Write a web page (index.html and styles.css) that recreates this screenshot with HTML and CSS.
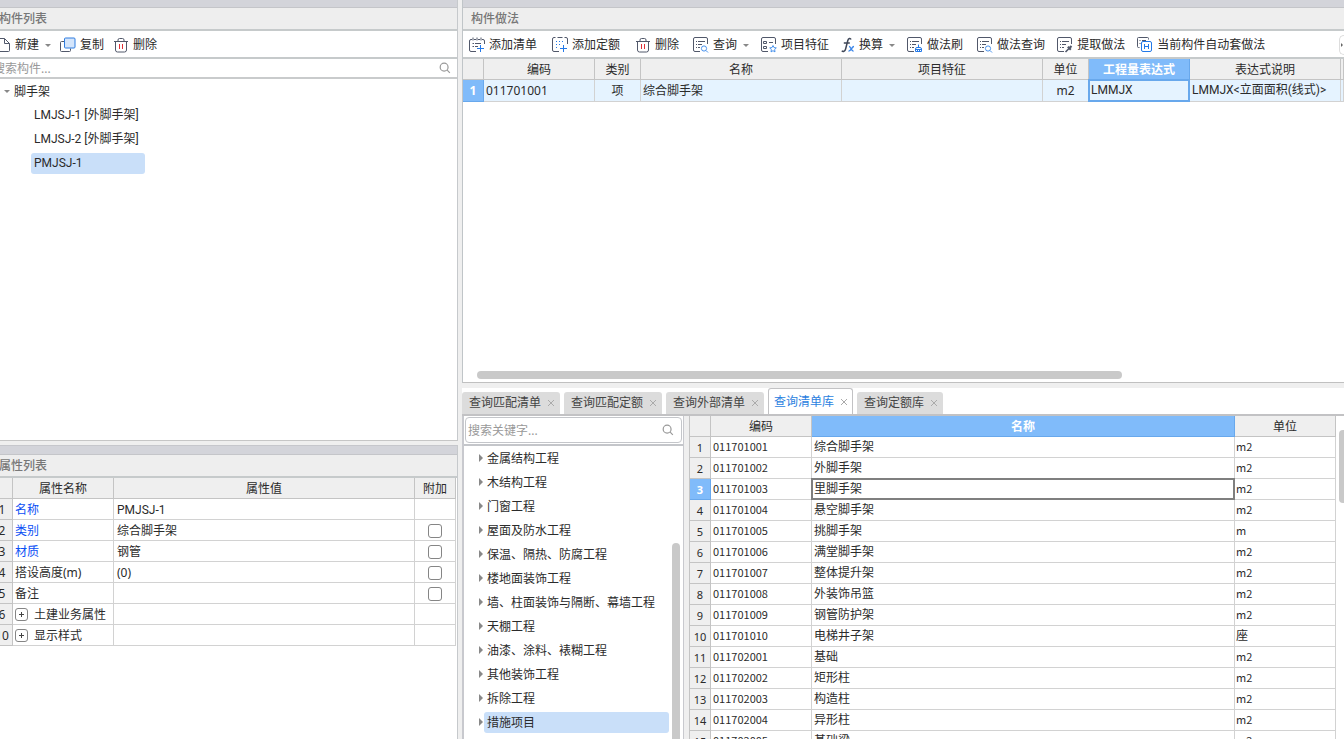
FILE: index.html
```
<!DOCTYPE html>
<html lang="zh-CN">
<head>
<meta charset="utf-8">
<title>构件做法</title>
<link rel="stylesheet" href="styles.css">
</head>
<body>
<svg class="defs" aria-hidden="true">
  <symbol id="i-trash" viewBox="0 0 16 16"><path d="M1 4.500h14M5 4.500V3a1.500 1.500 0 0 1 1.500-1.500h3A1.500 1.500 0 0 1 11 3v1.500M2.500 4.500V13a2 2 0 0 0 2 2h7a2 2 0 0 0 2-2V4.500" class="ink"/><path d="M6.500 7v5M9.500 7v5" class="red"/></symbol>
  <symbol id="i-doc" viewBox="0 0 16 16"><path d="M2.500 1.500h7l5 5v7a1 1 0 0 1-1 1h-11a1 1 0 0 1-1-1v-11a1 1 0 0 1 1-1zM9.500 1.500v5h5" class="ink"/></symbol>
  <symbol id="i-copy" viewBox="0 0 16 16"><path d="M4.500 4.500h-3a1 1 0 0 0-1 1v8a1 1 0 0 0 1 1h8a1 1 0 0 0 1-1v-2" class="ink"/><rect x="4.500" y="1" width="10.500" height="10" rx="1" fill="#d4e5fb" stroke="#2f7de0"/></symbol>
  <symbol id="i-find" viewBox="0 0 16 16"><circle cx="7" cy="7" r="4.500" fill="none" stroke="#999" stroke-width="1.400"/><path d="M10.500 10.500l3 3" stroke="#999" stroke-width="1.400"/></symbol>
  <symbol id="i-addlist" viewBox="0 0 16 16"><path d="M3 2.500H2A1.500 1.500 0 0 0 .5 4v9A1.500 1.500 0 0 0 2 14.500h5M13 2.500h1A1.500 1.500 0 0 1 15.500 4v3M5 2.500h2M9 2.500h2M4 .5v3M8 .5v3M12 .5v3" class="ink"/><path d="M3.500 6.500H5M6 6.500h6M3.500 9.500H5M6 9.500h3" class="ink"/><path d="M11.500 8v7M8 11.500h7" class="blue"/></symbol>
  <symbol id="i-addquota" viewBox="0 0 16 16"><path d="M3.500.5H2A1.500 1.500 0 0 0 .5 2v11A1.500 1.500 0 0 0 2 14.500h5M5.500.5h5M12.500.5H14A1.500 1.500 0 0 1 15.500 2v5" class="ink"/><path d="M4 4.500h1M7 4.500h1M10 4.500h1M4 7.500h1M7 7.500h1M4 10.500h1" class="blue"/><path d="M11.500 8v7M8 11.500h7" class="blue"/></symbol>
  <symbol id="i-sheet" viewBox="0 0 16 16"><path d="M7 14.500H2A1.500 1.500 0 0 1 .5 13V2A1.500 1.500 0 0 1 2 .5h11A1.500 1.500 0 0 1 14.500 2v5M3 4.500h1M5 4.500h7M3 7.500h1M5 7.500h4M3 10.500h1M5 10.500h2" class="ink"/></symbol>
  <symbol id="i-query" viewBox="0 0 16 16"><use href="#i-sheet"/><circle cx="11" cy="11.500" r="2.600" class="sky"/><path d="M13 13.500l2 2" class="sky"/></symbol>
  <symbol id="i-feature" viewBox="0 0 16 16"><path d="M7 14.500H2A1.500 1.500 0 0 1 .5 13V2A1.500 1.500 0 0 1 2 .5h11A1.500 1.500 0 0 1 14.500 2v5M2.500 4.500h3v2h-3zM2.500 9.500h3v2h-3zM8 5.500h4" class="ink"/><path d="M12 8.500l1 2.100 2.300.3-1.700 1.600.4 2.400-2-1.200-2 1.200.4-2.400-1.700-1.600 2.300-.3z" class="sky"/></symbol>
  <symbol id="i-fx" viewBox="0 0 14 16"><path d="M10 2.500C9.500 1 7.500 1 6.800 3.500L4.600 12C4 14.500 2 15 .8 13.800M2.800 6h6" fill="none" stroke="#3f4758" stroke-width="1.500"/><path d="M8 9.500c2-.5 2 5 4.500 4.500M13 9.500c-2-.3-3 5-5.500 4.500" fill="none" stroke="#3d87e8" stroke-width="1.400"/></symbol>
  <symbol id="i-brush" viewBox="0 0 16 16"><use href="#i-sheet"/><path d="M11.500 7.500v3M8.500 14.500V12A1.500 1.500 0 0 1 10 10.500h3a1.500 1.500 0 0 1 1.500 1.500v2.500zM8.500 12.500h6M10.500 12.500v2M12.500 12.500v2" class="blue"/></symbol>
  <symbol id="i-pick" viewBox="0 0 16 16"><use href="#i-sheet"/><path d="M8.500 15l3.500-3.500" stroke="#51586a" stroke-width="1.600"/><path d="M10.800 9.700l3 3M12.300 11.300l2.200-2.300" stroke="#51586a" stroke-width="2"/></symbol>
  <symbol id="i-auto" viewBox="0 0 16 16"><path d="M2.500 10.500h-1a1 1 0 0 1-1-1v-8a1 1 0 0 1 1-1h9a1 1 0 0 1 1 1v1M2.500 3.500h1M5 3.500h4M2.500 6.500h1" class="ink"/><rect x="4.500" y="4.500" width="10" height="10" rx="1.500" fill="#fff" stroke="#2379e8"/><path d="M7.500 7v5M11.500 7v5M7.500 9.500h4" class="blue"/></symbol>
</svg>

<div class="app">
  <aside class="side">
    <section class="panel side-top">
      <div class="strip"></div>
      <h2 class="title">构件列表</h2>
      <div class="toolbar">
        <button class="tool"><svg class="icon"><use href="#i-doc"/></svg>新建<i class="drop"></i></button>
        <button class="tool"><svg class="icon"><use href="#i-copy"/></svg>复制</button>
        <button class="tool"><svg class="icon"><use href="#i-trash"/></svg>删除</button>
      </div>
      <label class="search"><input type="text" placeholder="搜索构件..." aria-label="搜索构件"><svg class="icon small"><use href="#i-find"/></svg></label>
      <ul class="tree parts">
        <li><button class="node root"><i class="drop"></i>脚手架</button>
          <ul>
            <li><button class="node ident">LMJSJ-1 [外脚手架]</button></li>
            <li><button class="node ident">LMJSJ-2 [外脚手架]</button></li>
            <li><button class="node ident selected">PMJSJ-1</button></li>
          </ul>
        </li>
      </ul>
    </section>
    <section class="panel side-bottom">
      <div class="strip"></div>
      <h2 class="title">属性列表</h2>
      <table class="grid props">
        <colgroup><col class="w-no"><col class="w-name"><col><col class="w-check"></colgroup>
        <thead><tr><th></th><th>属性名称</th><th>属性值</th><th>附加</th></tr></thead>
        <tbody>
          <tr><th>1</th><td class="key">名称</td><td class="ident">PMJSJ-1</td><td></td></tr>
          <tr><th>2</th><td class="key">类别</td><td>综合脚手架</td><td class="mid"><input type="checkbox" aria-label="类别附加"></td></tr>
          <tr><th>3</th><td class="key">材质</td><td>钢管</td><td class="mid"><input type="checkbox" aria-label="材质附加"></td></tr>
          <tr><th>4</th><td>搭设高度(m)</td><td>(0)</td><td class="mid"><input type="checkbox" aria-label="搭设高度附加"></td></tr>
          <tr><th>5</th><td>备注</td><td></td><td class="mid"><input type="checkbox" aria-label="备注附加"></td></tr>
          <tr><th>6</th><td><span class="group"><button class="plus" aria-label="展开"></button>土建业务属性</span></td><td></td><td></td></tr>
          <tr><th>10</th><td><span class="group"><button class="plus" aria-label="展开"></button>显示样式</span></td><td></td><td></td></tr>
        </tbody>
      </table>
    </section>
  </aside>

  <main class="main">
    <section class="panel main-top">
      <div class="strip"></div>
      <h2 class="title">构件做法</h2>
      <div class="toolbar">
        <div class="tools wide">
          <button class="tool"><svg class="icon"><use href="#i-addlist"/></svg>添加清单</button>
          <button class="tool"><svg class="icon"><use href="#i-addquota"/></svg>添加定额</button>
          <button class="tool"><svg class="icon"><use href="#i-trash"/></svg>删除</button>
        </div>
        <div class="tools">
          <button class="tool"><svg class="icon"><use href="#i-query"/></svg>查询<i class="drop"></i></button>
          <button class="tool"><svg class="icon"><use href="#i-feature"/></svg>项目特征</button>
          <button class="tool"><svg class="icon narrow"><use href="#i-fx"/></svg>换算<i class="drop"></i></button>
          <button class="tool"><svg class="icon"><use href="#i-brush"/></svg>做法刷</button>
        </div>
        <div class="tools">
          <button class="tool"><svg class="icon"><use href="#i-query"/></svg>做法查询</button>
          <button class="tool"><svg class="icon"><use href="#i-pick"/></svg>提取做法</button>
          <button class="tool"><svg class="icon"><use href="#i-auto"/></svg>当前构件自动套做法</button>
        </div>
        <button class="more" aria-label="更多"></button>
      </div>
      <div class="sheet">
        <table class="grid method">
          <colgroup><col class="m-no"><col class="m-code"><col class="m-short"><col class="m-long"><col class="m-long"><col class="m-short"><col class="m-expr"><col class="m-desc"><col></colgroup>
          <thead><tr><th></th><th>编码</th><th>类别</th><th>名称</th><th>项目特征</th><th>单位</th><th class="on">工程量表达式</th><th>表达式说明</th><th></th></tr></thead>
          <tbody><tr><th class="on">1</th><td>011701001</td><td class="mid">项</td><td>综合脚手架</td><td></td><td class="mid">m2</td><td class="focus ident">LMMJX</td><td class="ident">LMMJX&lt;立面面积(线式)&gt;</td><td></td></tr></tbody>
        </table>
      </div>
      <div class="hscroll"><div class="thumb"></div></div>
    </section>

    <section class="main-bottom">
      <div class="tabs">
        <div class="tab"><button>查询匹配清单</button><button class="close" aria-label="关闭"></button></div>
        <div class="tab"><button>查询匹配定额</button><button class="close" aria-label="关闭"></button></div>
        <div class="tab"><button>查询外部清单</button><button class="close" aria-label="关闭"></button></div>
        <div class="tab active"><button>查询清单库</button><button class="close" aria-label="关闭"></button></div>
        <div class="tab"><button>查询定额库</button><button class="close" aria-label="关闭"></button></div>
      </div>
      <div class="library">
        <div class="chapters">
          <div class="searchbar"><label class="search boxed"><input type="text" placeholder="搜索关键字..." aria-label="搜索关键字"><svg class="icon small"><use href="#i-find"/></svg></label></div>
          <div class="chapter-body">
            <ul class="tree">
              <li><button class="node"><i class="fold"></i><span>金属结构工程</span></button></li>
              <li><button class="node"><i class="fold"></i><span>木结构工程</span></button></li>
              <li><button class="node"><i class="fold"></i><span>门窗工程</span></button></li>
              <li><button class="node"><i class="fold"></i><span>屋面及防水工程</span></button></li>
              <li><button class="node"><i class="fold"></i><span>保温、隔热、防腐工程</span></button></li>
              <li><button class="node"><i class="fold"></i><span>楼地面装饰工程</span></button></li>
              <li><button class="node"><i class="fold"></i><span>墙、柱面装饰与隔断、幕墙工程</span></button></li>
              <li><button class="node"><i class="fold"></i><span>天棚工程</span></button></li>
              <li><button class="node"><i class="fold"></i><span>油漆、涂料、裱糊工程</span></button></li>
              <li><button class="node"><i class="fold"></i><span>其他装饰工程</span></button></li>
              <li><button class="node"><i class="fold"></i><span>拆除工程</span></button></li>
              <li><button class="node"><i class="fold"></i><span class="selected">措施项目</span></button></li>
            </ul>
            <div class="vscroll"><div class="thumb"></div></div>
          </div>
        </div>
        <div class="items">
          <table class="grid list">
            <colgroup><col class="m-no"><col class="l-side"><col><col class="l-side"></colgroup>
            <thead><tr><th></th><th>编码</th><th class="on">名称</th><th>单位</th></tr></thead>
            <tbody>
              <tr><th>1</th><td>011701001</td><td>综合脚手架</td><td>m2</td></tr>
              <tr><th>2</th><td>011701002</td><td>外脚手架</td><td>m2</td></tr>
              <tr><th class="on">3</th><td>011701003</td><td class="focus">里脚手架</td><td>m2</td></tr>
              <tr><th>4</th><td>011701004</td><td>悬空脚手架</td><td>m2</td></tr>
              <tr><th>5</th><td>011701005</td><td>挑脚手架</td><td>m</td></tr>
              <tr><th>6</th><td>011701006</td><td>满堂脚手架</td><td>m2</td></tr>
              <tr><th>7</th><td>011701007</td><td>整体提升架</td><td>m2</td></tr>
              <tr><th>8</th><td>011701008</td><td>外装饰吊篮</td><td>m2</td></tr>
              <tr><th>9</th><td>011701009</td><td>钢管防护架</td><td>m2</td></tr>
              <tr><th>10</th><td>011701010</td><td>电梯井子架</td><td class="cjk">座</td></tr>
              <tr><th>11</th><td>011702001</td><td>基础</td><td>m2</td></tr>
              <tr><th>12</th><td>011702002</td><td>矩形柱</td><td>m2</td></tr>
              <tr><th>13</th><td>011702003</td><td>构造柱</td><td>m2</td></tr>
              <tr><th>14</th><td>011702004</td><td>异形柱</td><td>m2</td></tr>
              <tr><th>15</th><td>011702005</td><td>基础梁</td><td>m2</td></tr>
            </tbody>
          </table>
          <div class="vscroll"><div class="thumb"></div></div>
        </div>
      </div>
    </section>
  </main>
</div>
</body>
</html>
```
FILE: styles.css
```
* { box-sizing: border-box; }
body {
  margin: 0;
  height: 100vh;
  overflow: hidden;
  background: #efefef;
  color: #2b2b2b;
  font: 12px/20px "Noto Sans", "Noto Sans CJK SC", sans-serif;
}
button, input { font: inherit; color: inherit; }
button { border: 0; padding: 0; background: none; white-space: nowrap; }
ul { list-style: none; margin: 0; padding: 0; }
.defs { position: absolute; width: 0; height: 0; }
.ink { fill: none; stroke: #51586a; }
.blue { fill: none; stroke: #2379e8; }
.sky { fill: none; stroke: #4a93ec; }
.red { fill: none; stroke: #e03038; }
.ident { font-family: Roboto, "Noto Sans CJK SC", sans-serif; }

.app { display: grid; grid-template-columns: 458px minmax(0, 1fr); gap: 4px; height: 100%; overflow: hidden; }
.side, .main { display: flex; flex-direction: column; min-width: 0; min-height: 0; }
.side { gap: 4px; margin-left: -8px; }
.main { gap: 5px; }
.panel { display: flex; flex-direction: column; min-height: 0; background: #fff; overflow: hidden; }
.side-top { flex: 441 1 0; border-right: 1px solid #c6c9cc; border-bottom: 1px solid #c6c6c6; }
.side-bottom { flex: 294 1 0; border-top: 1px solid #c6c7cc; border-right: 1px solid #c6c9cc; }
.main-top { flex: 383 1 0; border-left: 1px solid #c0c5c8; border-bottom: 1px solid #c0c0c0; }

.strip { flex: none; height: 8px; background: #d3d4da; border-bottom: 1px solid #c4c5c9; }
.side-bottom .strip { height: 9px; }
.title {
  flex: none; margin: 0; height: 23px; padding: 0 8px; line-height: 21px;
  background: #eee; border-bottom: 2px solid #c6cacb;
  color: #777; font-size: 12px; font-weight: 500;
}
.side .title { padding: 0 7px; }
.toolbar { flex: none; display: flex; align-items: center; gap: 14px; height: 28px; padding: 2px 0 0 6px; border-bottom: 2px solid #c6cacb; }
.side .toolbar { gap: 9px; padding-left: 3px; }
.tools { display: flex; gap: 12px; }
.tools.wide { gap: 15px; }
.tool { display: flex; align-items: center; gap: 4px; }
.icon { flex: none; width: 16px; height: 16px; }
.icon.narrow { width: 14px; }
.icon.small { width: 14px; height: 14px; }
.drop { border: 3px solid transparent; border-top-color: #888; border-bottom: 0; }
.tool .drop { margin-left: 2px; }
.more { width: 5px; height: 20px; margin-left: auto; border: 1px solid #ddd; border-right: 0; border-radius: 5px 0 0 5px; display: grid; place-items: center; }
.more::before { content: ""; border: 2px solid transparent; border-left-color: #666; border-right: 0; }

.search { flex: none; display: flex; align-items: center; height: 20px; padding-right: 5px; border-bottom: 2px solid #c9cbcc; }
.search input { flex: 1; min-width: 0; height: 18px; border: 0; padding: 2px 1px 0; background: none; outline: 0; }
.search input::placeholder { color: #999; opacity: 1; }
.search.boxed { height: 26px; padding: 0 6px 0 0; border: 1px solid #c4c6ca; border-radius: 4px; background: #fff; }
.search.boxed input { padding-left: 2px; }

.node { display: flex; align-items: center; height: 24px; line-height: 21px; }
.root { gap: 4px; padding-left: 12px; }
.parts ul { padding-left: 39px; }
.parts ul li { height: 24px; display: flex; align-items: center; }
.parts ul .node { height: 21px; width: 114px; padding-left: 3px; border-radius: 3px; }
.selected { background: #c9dff9; border-radius: 3px; }

.grid { width: 100%; table-layout: fixed; border-collapse: separate; border-spacing: 0; }
.grid th, .grid td {
  height: 21px; padding: 2px 2px 0; line-height: 18px; overflow: hidden; white-space: nowrap;
  border-right: 1px solid #d2d2d2; border-bottom: 1px solid #d2d2d2;
  font-weight: 400; text-align: left;
}
.grid th { padding: 2px 0 0; background: #efefef; border-color: #c4c4c4; text-align: center; }
.grid .mid { text-align: center; }
.grid th.on { background: #80bbfa; border-color: #68a8ec; color: #fff; font-weight: 700; }

.props { width: auto; margin-right: 1px; }
.w-no { width: 21px; }
.w-name { width: 101px; }
.w-check { width: 41px; }
.props td:nth-child(3) { padding-left: 3px; }
.props .key { color: #0b50f5; }
.props input {
  appearance: none; display: block; width: 14px; height: 14px; margin: 0 auto;
  border: 1px solid #858585; border-radius: 3px; background: #fff;
}
.group { display: flex; align-items: center; gap: 6px; }
.plus { width: 13px; height: 13px; border: 1px solid #858585; border-radius: 3px; display: grid; place-items: center; }
.plus::before { content: ""; width: 5px; height: 5px; background: linear-gradient(#444, #444) center / 5px 1px no-repeat, linear-gradient(#444, #444) center / 1px 5px no-repeat; }

.sheet { flex: 1; min-height: 0; overflow: hidden; }
.m-no { width: 21px; }
.m-code { width: 111px; }
.m-short { width: 46px; }
.m-long { width: 201px; }
.m-expr { width: 101px; }
.m-desc { width: 151px; }
.method tbody th, .method tbody td { height: 22px; padding-top: 0; line-height: 21px; }
.method td { background: #e5f3ff; }
.method td.focus {
  border-color: #68a8ec;
  box-shadow: inset 0 0 0 1px #68a8ec, -1px 0 #68a8ec, 0 -1px #68a8ec, -1px -1px #68a8ec;
}
.hscroll { flex: none; height: 11px; padding: 0 222px 3px 14px; }
.thumb { height: 100%; border-radius: 4px; background: #c9c9c9; }

.main-bottom { flex: 351 1 0; display: flex; flex-direction: column; min-height: 0; }
.tabs { flex: none; display: flex; align-items: flex-end; gap: 4px; height: 28px; padding-bottom: 2px; background: linear-gradient(#c2c2c4, #c2c2c4) bottom / 100% 2px no-repeat #fff; }
.tab { display: flex; align-items: center; gap: 7px; height: 22px; padding: 0 6px 0 7px; border-radius: 3px 3px 0 0; background: #dcdcdc; color: #444; }
.tab.active { height: 26px; padding: 0 5px; border: 1px solid #c2c2c4; border-bottom: 0; background: #fff; color: #2b7fe0; }
.close { width: 6px; height: 6px; background: linear-gradient(45deg, transparent 44%, #aaa 44%, #aaa 56%, transparent 56%), linear-gradient(-45deg, transparent 44%, #aaa 44%, #aaa 56%, transparent 56%); }

.library { flex: 1; min-height: 0; display: grid; grid-template-columns: 222px minmax(0, 1fr); gap: 5px; }
.chapters { display: flex; flex-direction: column; min-height: 0; background: #fff; border-left: 2px solid #c8c9ce; border-right: 1px solid #c8c9ce; }
.searchbar { flex: none; padding: 1px; border-bottom: 2px solid #c4c6ca; }
.chapter-body { flex: 1; min-height: 0; display: flex; overflow: hidden; }
.chapter-body .tree { flex: 1; padding-left: 15px; }
.chapter-body .node { width: 100%; gap: 1px; }
.chapter-body .node span { flex: 1; height: 21px; padding-left: 3px; text-align: left; }
.fold { border: 4px solid transparent; border-left-color: #888; border-right: 0; }
.chapter-body .vscroll { width: 14px; padding: 97px 3px 0; }
.chapter-body .thumb { border-radius: 4px 4px 0 0; }
.items { display: flex; align-items: flex-start; gap: 3px; min-width: 0; min-height: 0; overflow: hidden; background: #fff; border-left: 1px solid #c4c4c4; }
.list { flex: 1; }
.l-side { width: 101px; }
.list tbody th { font-size: 11px; }
.list td { padding: 0 2px 2px; font: 11px/18px "Noto Sans CJK SC", sans-serif; }
.list td:nth-child(3), .list td.cjk { font-size: 12px; }
.list td:nth-child(4) { padding-left: 1px; }
.list td.focus {
  border-color: #7f7f7f;
  box-shadow: inset 0 0 0 1px #7f7f7f, -1px 0 #7f7f7f, 0 -1px #7f7f7f, -1px -1px #7f7f7f;
}
.items .vscroll { width: 5px; height: 87px; padding-top: 14px; }
.items .thumb { border-radius: 4px 0 0 4px; }
```
